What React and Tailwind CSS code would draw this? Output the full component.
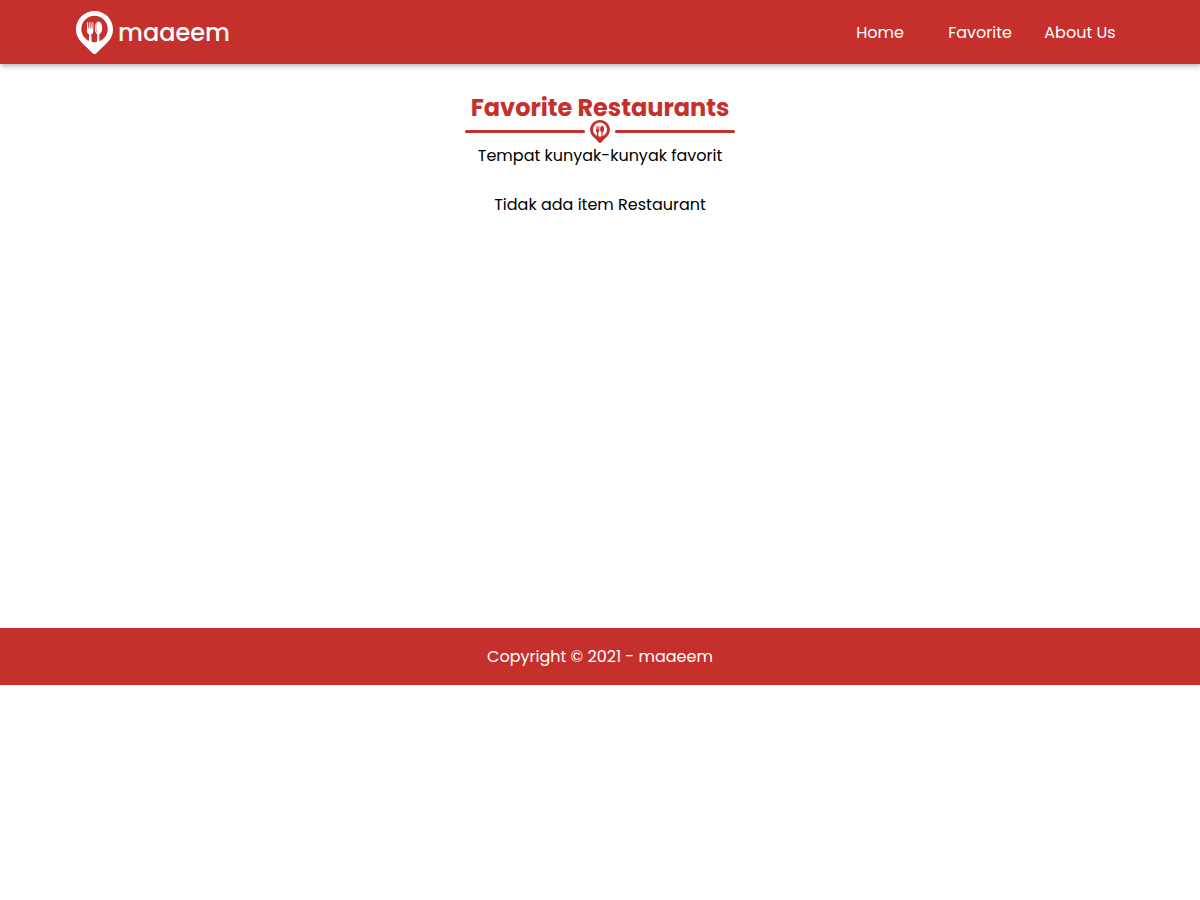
import React from "react";

const links = ["Home", "Favorite", "About Us"];

function PinLogo({ className }) {
  return (
    <svg viewBox="0 0 37 43" className={className} fill="currentColor" aria-hidden="true">
      <path
        fillRule="evenodd"
        d="M18.500 0C8.300 0 0 8.200 0 18.400c0 5.300 2.200 9.500 5.700 13.100 3.300 3.400 7.300 7.300 11.300 10.900.9.800 2.100.8 3 0 4-3.600 8-7.500 11.300-10.900 3.500-3.600 5.700-7.800 5.700-13.100C37 8.200 28.700 0 18.500 0Zm0 4.800a13.200 13.200 0 0 1 0 26.400a13.200 13.200 0 0 1 0-26.400Z"
      />
      <path d="M11 11.200h.9l.2 6.300h.6l.2-6.300h.8l.2 6.300h.6l.2-6.300h.8l.2 6.300h.6l.2-6.300h.8v8.600c0 2-.8 3.200-2.100 3.600l.6 8.200h-3.100l.5-8.200c-1.300-.4-2.200-1.600-2.200-3.600Z" />
      <path d="M22.600 10.600c2.100 0 3.600 2.800 3.600 6.400 0 3.200-1.100 5.400-2.900 6.200l.2 8.400h-2.700l.5-8.400c-1.500-.8-2.500-3-2.500-6.200 0-3.600 1.700-6.400 3.800-6.400Z" />
      <path
        d="M20.600 12.500c-1.100 2.500-1.100 5.300.6 8.700"
        fill="none"
        className="stroke-[#c5302c]"
        strokeWidth=".5"
        strokeLinecap="round"
      />
    </svg>
  );
}

export default function App() {
  return (
    <div className="bg-white font-['Poppins','Inter',sans-serif] text-base leading-[25px] text-black">
      <header className="relative flex h-16 items-center justify-between bg-[#c5302c] px-[70px] text-white shadow-[1px_2px_5px_rgba(0,0,0,0.3)]">
        <a href="#" className="flex items-center gap-[5px] pl-1.5">
          <PinLogo className="h-[43px] w-[37px]" />
          <span className="pt-0.5 text-2xl leading-9 font-medium">maaeem</span>
        </a>
        <nav>
          <ul className="flex">
            {links.map((label) => (
              <li key={label} className="w-[100px] text-center">
                <a href="#">{label}</a>
              </li>
            ))}
          </ul>
        </nav>
      </header>

      <main className="flex min-h-[564px] flex-col items-center pt-7 text-center">
        <h1 className="h-7 text-2xl leading-8 font-bold text-[#c5302c]">Favorite Restaurants</h1>
        <div className="flex items-center justify-center gap-[5px] text-[#c5302c]">
          <span className="h-[3px] w-[120px] rounded-full bg-[#c5302c]" />
          <PinLogo className="h-[23px] w-5" />
          <span className="h-[3px] w-[120px] rounded-full bg-[#c5302c]" />
        </div>
        <p>Tempat kunyak-kunyak favorit</p>
        <p className="pt-6">Tidak ada item Restaurant</p>
      </main>

      <footer className="bg-[#c5302c] py-4 text-center text-white">
        <p>Copyright © 2021 - maaeem</p>
      </footer>
    </div>
  );
}
